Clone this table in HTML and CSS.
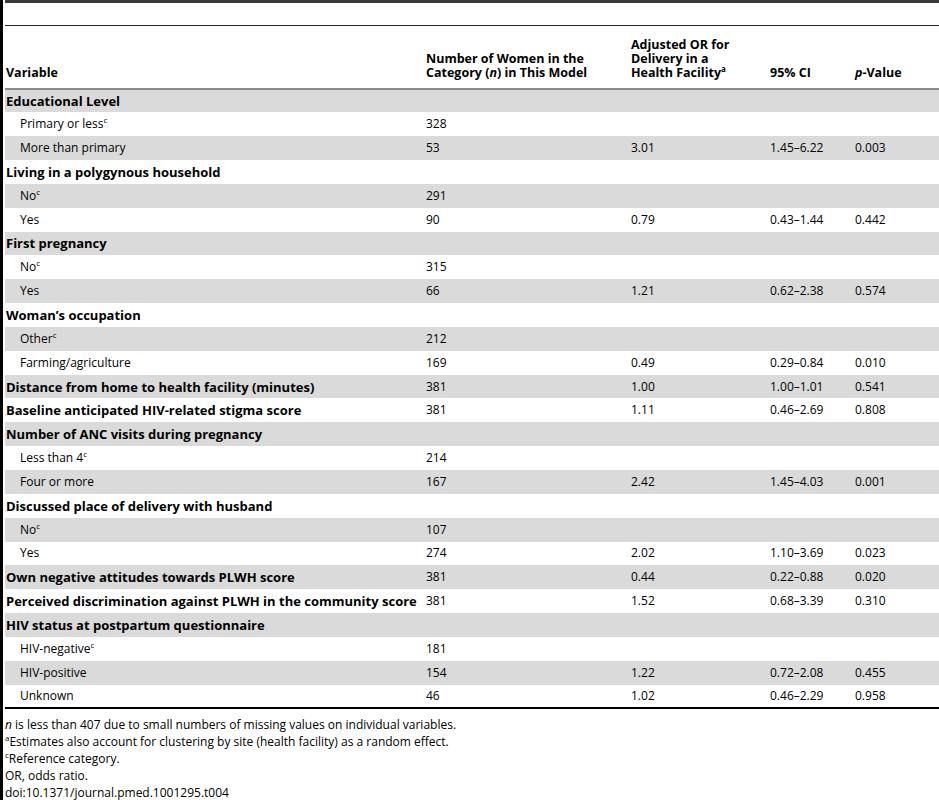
FILE: index.html
```html
<!DOCTYPE html>
<html lang="en">
<head>
  <meta charset="UTF-8">
  <title>Table 4</title>
  <link rel="stylesheet" href="styles.css">
</head>
<body>

  <div class="frame">

    <div class="top-rule"></div>

    <table class="results">
      <colgroup>
        <col class="c-var">
        <col class="c-num">
        <col class="c-or">
        <col class="c-ci">
        <col class="c-p">
      </colgroup>
      <thead>
        <tr>
          <th>Variable</th>
          <th>Number of Women in the Category (<i>n</i>) in This Model</th>
          <th class="narrow">Adjusted OR for Delivery in a Health Facility<sup>a</sup></th>
          <th>95% CI</th>
          <th><i>p</i>-Value</th>
        </tr>
      </thead>
      <tbody>
        <tr class="group"><td>Educational Level</td><td></td><td></td><td></td><td></td></tr>
        <tr><td class="sub">Primary or less<sup>c</sup></td><td>328</td><td></td><td></td><td></td></tr>
        <tr><td class="sub">More than primary</td><td>53</td><td>3.01</td><td>1.45–6.22</td><td>0.003</td></tr>
        <tr class="group"><td>Living in a polygynous household</td><td></td><td></td><td></td><td></td></tr>
        <tr><td class="sub">No<sup>c</sup></td><td>291</td><td></td><td></td><td></td></tr>
        <tr><td class="sub">Yes</td><td>90</td><td>0.79</td><td>0.43–1.44</td><td>0.442</td></tr>
        <tr class="group"><td>First pregnancy</td><td></td><td></td><td></td><td></td></tr>
        <tr><td class="sub">No<sup>c</sup></td><td>315</td><td></td><td></td><td></td></tr>
        <tr><td class="sub">Yes</td><td>66</td><td>1.21</td><td>0.62–2.38</td><td>0.574</td></tr>
        <tr class="group"><td>Woman’s occupation</td><td></td><td></td><td></td><td></td></tr>
        <tr><td class="sub">Other<sup>c</sup></td><td>212</td><td></td><td></td><td></td></tr>
        <tr><td class="sub">Farming/agriculture</td><td>169</td><td>0.49</td><td>0.29–0.84</td><td>0.010</td></tr>
        <tr class="group"><td>Distance from home to health facility (minutes)</td><td>381</td><td>1.00</td><td>1.00–1.01</td><td>0.541</td></tr>
        <tr class="group"><td>Baseline anticipated HIV-related stigma score</td><td>381</td><td>1.11</td><td>0.46–2.69</td><td>0.808</td></tr>
        <tr class="group"><td>Number of ANC visits during pregnancy</td><td></td><td></td><td></td><td></td></tr>
        <tr><td class="sub">Less than 4<sup>c</sup></td><td>214</td><td></td><td></td><td></td></tr>
        <tr><td class="sub">Four or more</td><td>167</td><td>2.42</td><td>1.45–4.03</td><td>0.001</td></tr>
        <tr class="group"><td>Discussed place of delivery with husband</td><td></td><td></td><td></td><td></td></tr>
        <tr><td class="sub">No<sup>c</sup></td><td>107</td><td></td><td></td><td></td></tr>
        <tr><td class="sub">Yes</td><td>274</td><td>2.02</td><td>1.10–3.69</td><td>0.023</td></tr>
        <tr class="group"><td>Own negative attitudes towards PLWH score</td><td>381</td><td>0.44</td><td>0.22–0.88</td><td>0.020</td></tr>
        <tr class="group"><td>Perceived discrimination against PLWH in the community score</td><td>381</td><td>1.52</td><td>0.68–3.39</td><td>0.310</td></tr>
        <tr class="group"><td>HIV status at postpartum questionnaire</td><td></td><td></td><td></td><td></td></tr>
        <tr><td class="sub">HIV-negative<sup>c</sup></td><td>181</td><td></td><td></td><td></td></tr>
        <tr><td class="sub">HIV-positive</td><td>154</td><td>1.22</td><td>0.72–2.08</td><td>0.455</td></tr>
        <tr><td class="sub">Unknown</td><td>46</td><td>1.02</td><td>0.46–2.29</td><td>0.958</td></tr>
      </tbody>
    </table>

    <div class="notes">
      <p><i>n</i> is less than 407 due to small numbers of missing values on individual variables.</p>
      <p><sup>a</sup>Estimates also account for clustering by site (health facility) as a random effect.</p>
      <p><sup>c</sup>Reference category.</p>
      <p>OR, odds ratio.</p>
      <p>doi:10.1371/journal.pmed.1001295.t004</p>
    </div>

  </div>

</body>
</html>
```

FILE: styles.css
```css
body {
    padding: 0;
    margin: 0;
    font-family: "Open Sans", "Liberation Sans", sans-serif;
    font-size: 12px;
    color: #000;
    background: #fff;
}

.frame {
    min-height: 100vh;
    border-left: 3px solid #000;
    padding-left: 2px;
    box-sizing: border-box;
}

.top-rule {
    height: 22px;
    border-top: 3px solid #3a3a3a;
}

.results {
    width: 934px;
    table-layout: fixed;
    border-collapse: collapse;
    border-top: 1px solid #222;
    border-bottom: 2px solid #000;
}

.c-var { width: 421px; }
.c-num { width: 205px; }
.c-or  { width: 139px; }
.c-ci  { width: 85px; }
.c-p   { width: 84px; }

.results thead tr {
    height: 63px;
}

.results th {
    text-align: left;
    vertical-align: bottom;
    font-size: 12.5px;
    font-weight: bold;
    line-height: 14px;
    padding: 0 6px 8px 0;
    border-bottom: 2px solid #8a8a8a;
}

.results th.narrow {
    padding-right: 22px;
}

.results th:first-child,
.results td:first-child {
    padding-left: 1px;
}

.results td {
    height: 23.85px;
    box-sizing: border-box;
    padding: 0 4px 0 0;
    line-height: 16px;
    vertical-align: middle;
    white-space: nowrap;
}

.results tbody tr:nth-child(odd) {
    background-color: #dadada;
}

.results tr.group td:first-child {
    font-size: 13px;
    font-weight: bold;
}

.results td.sub {
    padding-left: 15px;
}

sup {
    font-size: 8px;
    line-height: 0;
    vertical-align: 5px;
}

.notes {
    padding-top: 7px;
}

.notes p {
    margin: 0;
    line-height: 17px;
}
```
